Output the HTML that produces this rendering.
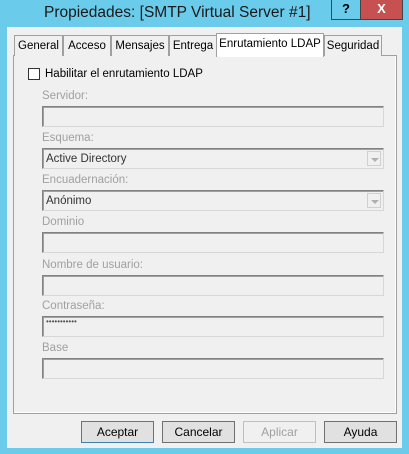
<!DOCTYPE html>
<html><head><style>
*{box-sizing:border-box;margin:0;padding:0}
body{width:409px;height:454px;background:#6acbea;position:relative;overflow:hidden;font-family:"Liberation Sans",sans-serif;font-size:12px;color:#000}
.a{position:absolute}
.title{left:44px;top:4px;font-size:15.5px;color:#1a1a1a}
.help{left:331px;top:0;width:30px;height:20px;border:1px solid #444;border-top:none;background:#6acbea;text-align:center;font-weight:bold;font-size:13px;line-height:18px}
.close{left:360px;top:0;width:43px;height:20px;background:#c75050;border:1px solid #444;border-top:none;color:#fff;text-align:center;font-weight:bold;font-size:13px;line-height:18px}
.client{left:7px;top:27px;width:395px;height:421px;background:#f0f0f0}
.tab{top:35px;height:21px;border:1px solid #a0a0a0;border-bottom:none;background:#f0f0f0;line-height:20px;text-align:center;font-size:11.5px}
.panel{left:13px;top:55px;width:384px;height:359px;border:1px solid #a0a0a0;background:#f0f0f0;box-shadow:inset -1px -1px 0 #fff}
.lbl{left:42px;color:#a0a0a0;font-size:11.5px}
.inp{left:42px;width:342px;height:21px;border:1px solid #d7d7d7;border-top-color:#828282;border-left-color:#828282;background:#f0f0f0;box-shadow:inset 1px 1px 0 #a0a0a0}
.cb{font-size:11.5px;color:#333;padding-left:3px;line-height:20px}
.arr{right:2px;top:2px;width:14px;height:15px;border:1px solid #d0d0d0;background:#f0f0f0}
.arr:after{content:"";position:absolute;left:3px;top:6px;border-left:4px solid transparent;border-right:4px solid transparent;border-top:4px solid #b0b0b0}
.btn{top:421px;width:73px;height:22px;border:1px solid #707070;background:#e1e1e1;text-align:center;line-height:20px;font-size:12px}
</style></head><body>
<div class="a title">Propiedades: [SMTP Virtual Server #1]</div>
<div class="a help">?</div>
<div class="a close">X</div>
<div class="a client"></div>
<div class="a panel"></div>
<div class="a tab" style="left:14px;width:49px">General</div>
<div class="a tab" style="left:63px;width:48px">Acceso</div>
<div class="a tab" style="left:111px;width:58px">Mensajes</div>
<div class="a tab" style="left:169px;width:48px">Entrega</div>
<div class="a tab" style="left:324px;width:58px">Seguridad</div>
<div class="a tab" style="left:216px;top:33px;width:108px;height:24px;background:#fff;line-height:21px;border-color:#a0a0a0">Enrutamiento LDAP</div>
<div class="a" style="left:28px;top:68px;width:12px;height:12px;border:1px solid #333;background:#fff"></div>
<div class="a" style="left:45px;top:68px;font-size:11.5px">Habilitar el enrutamiento LDAP</div>
<div class="a lbl" style="top:90px">Servidor:</div>
<div class="a inp" style="top:106px"></div>
<div class="a lbl" style="top:132px">Esquema:</div>
<div class="a inp cb" style="top:148px">Active Directory<div class="a arr"></div></div>
<div class="a lbl" style="top:174px">Encuadernación:</div>
<div class="a inp cb" style="top:190px">Anónimo<div class="a arr"></div></div>
<div class="a lbl" style="top:216px">Dominio</div>
<div class="a inp" style="top:232px"></div>
<div class="a lbl" style="top:259px">Nombre de usuario:</div>
<div class="a inp" style="top:275px"></div>
<div class="a lbl" style="top:300px">Contraseña:</div>
<div class="a inp" style="top:316px;font-size:8px;color:#555;padding-left:3px;line-height:10px">•••••••••••</div>
<div class="a lbl" style="top:342px">Base</div>
<div class="a inp" style="top:358px"></div>
<div class="a btn" style="left:81px;border-color:#3c7fb1">Aceptar</div>
<div class="a btn" style="left:162px">Cancelar</div>
<div class="a btn" style="left:243px;border-color:#bfbfbf;background:#f0f0f0;color:#a0a0a0">Aplicar</div>
<div class="a btn" style="left:324px">Ayuda</div>
</body></html>
